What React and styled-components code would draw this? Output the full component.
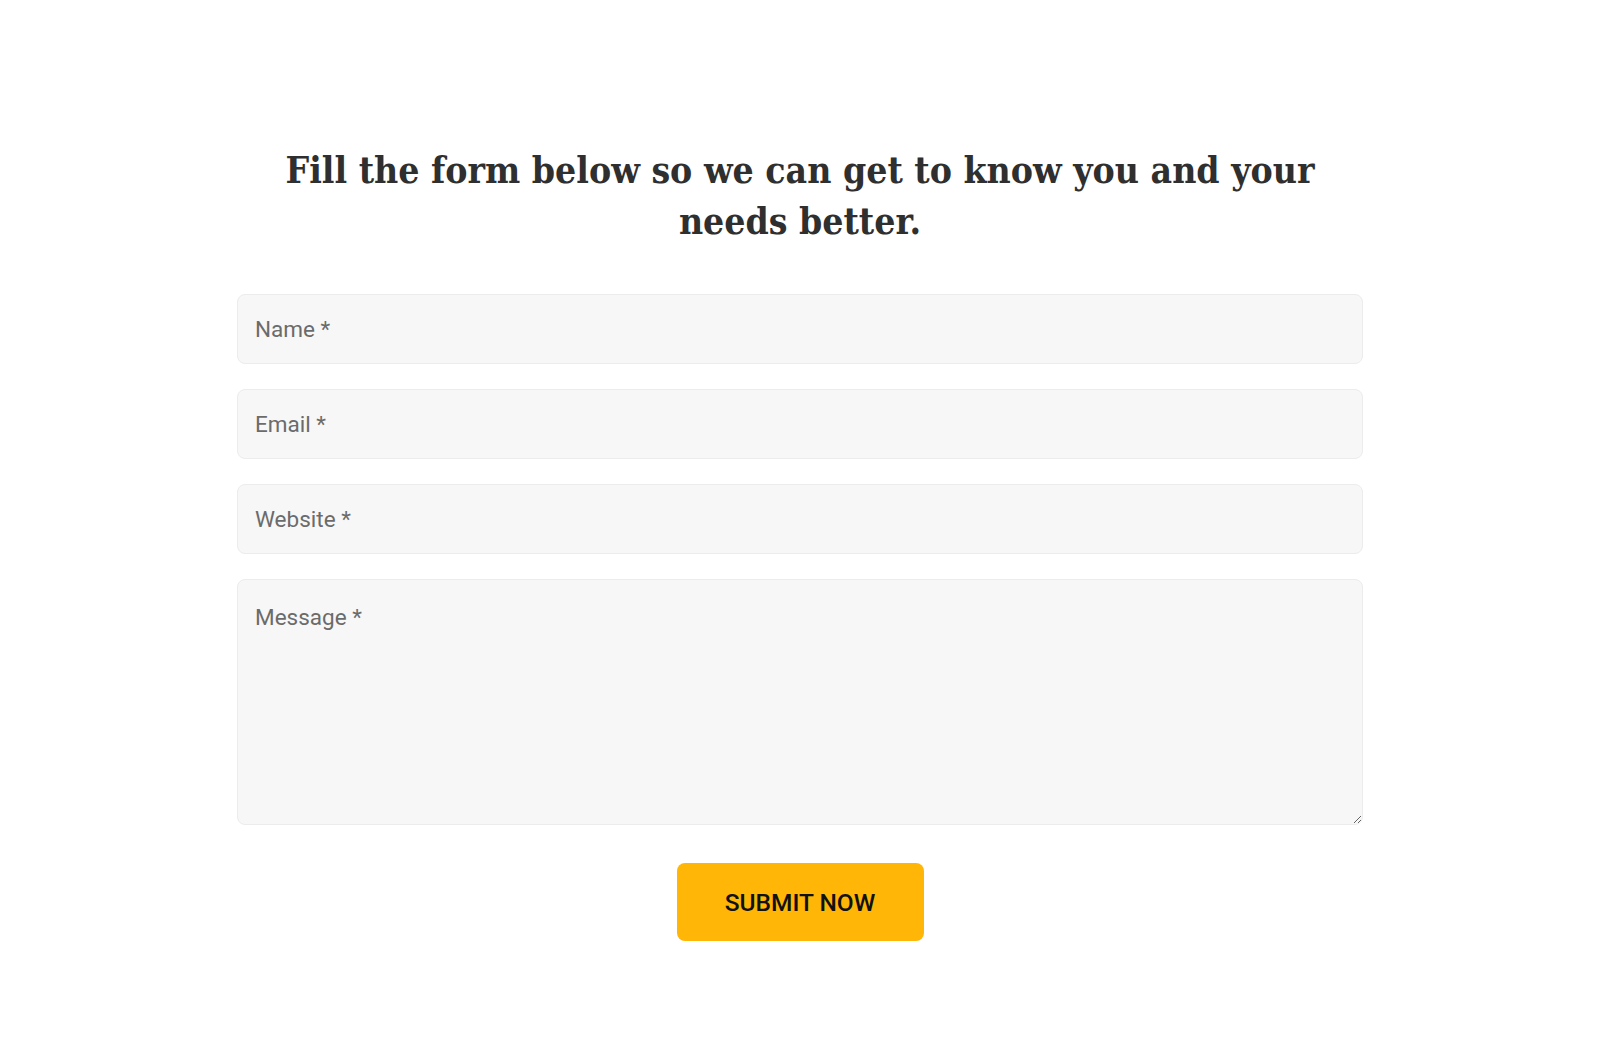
import React from "react";
import styled, { createGlobalStyle } from "styled-components";

const Global = createGlobalStyle`
  html, body { margin: 0; padding: 0; background: #ffffff; }
  body { font-family: Roboto, "Noto Sans", sans-serif; }
  * { box-sizing: border-box; }
`;

const Page = styled.main`
  display: flex;
  justify-content: center;
  padding-top: 145px;
  min-height: 1064px;
`;

const Wrap = styled.div`
  width: 1126px;
  display: flex;
  flex-direction: column;
  align-items: stretch;
`;

const Heading = styled.h2`
  margin: 0 0 47px;
  text-align: center;
  font-family: "DejaVu Serif", "Liberation Serif", serif;
  font-stretch: condensed;
  font-weight: 700;
  font-size: 37px;
  line-height: 51px;
  color: #2f2f2f;
`;

const Form = styled.form`
  display: flex;
  flex-direction: column;
  gap: 25px;
`;

const fieldBase = `
  width: 100%;
  background: #f7f7f7;
  border: 1px solid #ececec;
  border-radius: 8px;
  font-family: Roboto, "Noto Sans", sans-serif;
  font-size: 22.5px;
  color: #333;
  padding: 0 17px;
  outline: none;
  &::placeholder { color: #6b6b6b; opacity: 1; }
`;

const Input = styled.input`
  ${fieldBase}
  height: 70px;
`;

const TextArea = styled.textarea`
  ${fieldBase}
  height: 246px;
  padding-top: 24px;
  resize: vertical;
  display: block;
`;

const ButtonRow = styled.div`
  display: flex;
  justify-content: center;
  padding-top: 13px;
`;

const Submit = styled.button`
  width: 247px;
  height: 78px;
  border: none;
  border-radius: 8px;
  background: #ffb606;
  color: #111;
  font-family: Roboto, "Noto Sans", sans-serif;
  font-weight: 500;
  font-size: 24.5px;
  text-transform: uppercase;
  cursor: pointer;
`;

export default function App() {
  return (
    <>
      <Global />
      <Page>
        <Wrap>
          <Heading>
            Fill the form below so we can get to know you and your
            <br />
            needs better.
          </Heading>
          <Form onSubmit={(e) => e.preventDefault()}>
            <Input type="text" placeholder="Name *" />
            <Input type="email" placeholder="Email *" />
            <Input type="url" placeholder="Website *" />
            <TextArea placeholder="Message *" />
            <ButtonRow>
              <Submit type="submit">Submit Now</Submit>
            </ButtonRow>
          </Form>
        </Wrap>
      </Page>
    </>
  );
}
